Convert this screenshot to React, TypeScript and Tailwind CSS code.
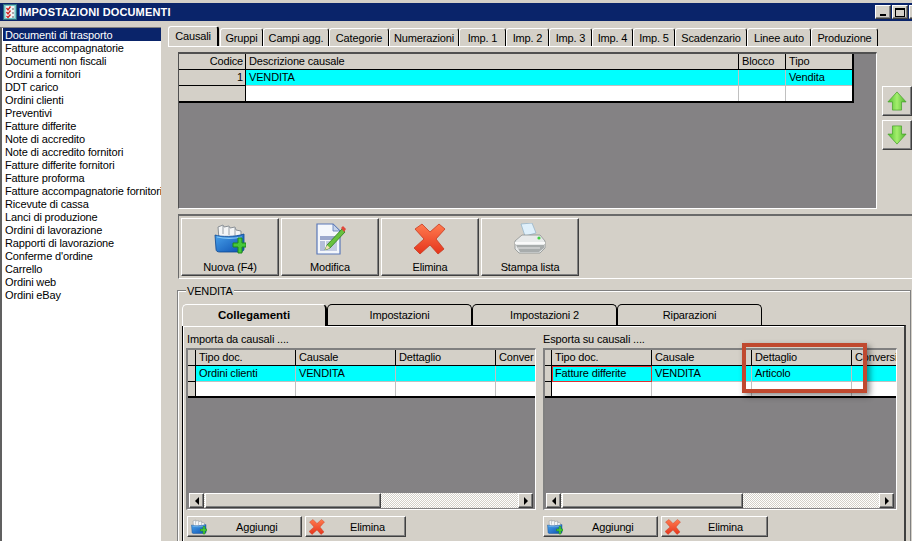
import React from "react";

const raised = "border border-t-white border-l-white border-r-[#404040] border-b-[#404040] shadow-[inset_-1px_-1px_0_#808080] bg-[#d4d0c8]";

const items = ["Documenti di trasporto","Fatture accompagnatorie","Documenti non fiscali","Ordini a fornitori","DDT carico","Ordini clienti","Preventivi","Fatture differite","Note di accredito","Note di accredito fornitori","Fatture differite fornitori","Fatture proforma","Fatture accompagnatorie fornitori","Ricevute di cassa","Lanci di produzione","Ordini di lavorazione","Rapporti di lavorazione","Conferme d'ordine","Carrello","Ordini web","Ordini eBay"];

const topTabs: [string, number][] = [["Gruppi",43],["Campi agg.",66],["Categorie",60],["Numerazioni",70],["Imp. 1",47],["Imp. 2",43],["Imp. 3",43],["Imp. 4",41],["Imp. 5",42],["Scadenzario",72],["Linee auto",64],["Produzione",67]];

function FolderIcon({ s = 32, id }: { s?: number; id: string }) {
  return (
    <svg width={s} height={s} viewBox="0 0 32 32">
      <defs>
        <linearGradient id={id} x1="0" y1="0" x2="1" y2="1">
          <stop offset="0" stopColor="#4aa3ec" />
          <stop offset="1" stopColor="#0b4fb0" />
        </linearGradient>
      </defs>
      <path d="M4 4l5-2 1 2 5-1 1 2 5-1 1 3 5 1v8H5z" fill="#f4f5f6" stroke="#8a9096" strokeWidth="1" />
      <path d="M9 3v8M15 4v8M21 5v7" stroke="#9aa0a6" strokeWidth="1" />
      <path d="M1 12c6 2 20 2 29-1v15c0 2-2 3-4 3H6c-3 0-4-1-4-3z" fill={`url(#${id})`} stroke="#0d468f" strokeWidth="0.8" />
      <path d="M3 14c8 2 16 2 25 0" stroke="#8cc8f4" strokeWidth="1.2" fill="none" />
      <path d="M19 20h5v-5h4v5h4v4h-4v6h-4v-6h-5z" fill="#46c83a" stroke="#1f8a18" strokeWidth="1" />
    </svg>
  );
}

function DocIcon() {
  return (
    <svg width="32" height="32" viewBox="0 0 32 32">
      <path d="M3 1h16l7 7v23H3z" fill="#f4f7fc" stroke="#5a78b8" strokeWidth="1.2" />
      <path d="M19 1v7h7z" fill="#c7d4ea" stroke="#5a78b8" strokeWidth="0.8" />
      <rect x="6" y="13" width="17" height="4" fill="#9ba8cc" />
      <rect x="6" y="18" width="5" height="10" fill="#b4bedb" />
      <rect x="12" y="18" width="11" height="10" fill="#c4cce2" />
      <path d="M28 6l3 3-15 16-5 2 2-5z" fill="#68c23e" stroke="#2e7a1e" strokeWidth="0.8" />
      <path d="M27 5l2-2 3 3-2 3z" fill="#e0483a" />
      <path d="M13 22l3 3-5 2z" fill="#f1dfb8" />
    </svg>
  );
}

function XIcon({ s = 32, id }: { s?: number; id: string }) {
  return (
    <svg width={s} height={s} viewBox="0 0 32 32">
      <defs>
        <linearGradient id={id} x1="0" y1="0" x2="0" y2="1">
          <stop offset="0" stopColor="#ff7b4f" />
          <stop offset="1" stopColor="#e5341c" />
        </linearGradient>
      </defs>
      <path d="M8 1l8 8 9-8 6 5-9 10 8 10-6 5-8-9-10 9-6-6 10-9-9-10z" fill={`url(#${id})`} stroke="#c73a20" strokeWidth="0.8" />
    </svg>
  );
}

function PrinterIcon() {
  return (
    <svg width="32" height="32" viewBox="0 0 32 32">
      <path d="M7 1l11-1 4 10-11 3z" fill="#dff0fb" stroke="#8fb0c6" strokeWidth="0.7" />
      <path d="M1 18l7-6h18l5 6v7l-5 5H5l-4-4z" fill="#e8eaea" stroke="#8c9090" strokeWidth="0.8" />
      <path d="M1 19h30v2H1z" fill="#fafafa" />
      <path d="M2 22h28v3l-5 4H6z" fill="#a8acac" />
      <path d="M4 25h22" stroke="#e8e8e8" strokeWidth="1" />
      <circle cx="25" cy="15" r="1.6" fill="#40d040" />
    </svg>
  );
}

function Arrow({ down, id }: { down?: boolean; id: string }) {
  return (
    <svg width="20" height="20" viewBox="0 0 22 22">
      <defs>
        <linearGradient id={id} x1="0" y1="0" x2="1" y2="0">
          <stop offset="0" stopColor="#4fbf30" />
          <stop offset="0.5" stopColor="#a4ee6c" />
          <stop offset="1" stopColor="#4cb42c" />
        </linearGradient>
      </defs>
      <path d={down ? "M6 1h10v9h5L11 21 1 10h5z" : "M11 1l10 11h-5v9H6v-9H1z"} fill={`url(#${id})`} stroke="#46a02a" strokeWidth="0.8" />
    </svg>
  );
}

function TitleIcon() {
  return (
    <svg width="14" height="16" viewBox="0 0 14 16">
      <rect x="0.5" y="0.5" width="13" height="15" fill="#6fc3c8" stroke="#2d6d7c" />
      <rect x="2.5" y="2" width="9" height="12" fill="#f2f2f2" />
      <path d="M3.5 4l1.5 2 2.5-3.5M3.5 8l1.5 2 2.5-3.5M3.5 12l1.5 1.5 2.5-3" fill="none" stroke="#d02020" strokeWidth="1.3" />
      <path d="M9 5h2M9 9h2M9 13h2" stroke="#606060" />
    </svg>
  );
}

function BigBtn({ label, icon }: { label: string; icon: React.ReactNode }) {
  return (
    <div className={`w-[98px] h-[58px] flex flex-col items-center pt-[4px] ${raised}`}>
      <div className="h-[32px]">{icon}</div>
      <span className="mt-[6px] leading-[13px]">{label}</span>
    </div>
  );
}

function SmallBtn({ w, label, icon, pl }: { w: string; label: string; icon: React.ReactNode; pl: string }) {
  return (
    <div className={`${w} h-[21px] flex items-center pl-[3px] ${raised}`}>
      <div className="w-[16px] h-[16px]">{icon}</div>
      <span className={`${pl} mt-[2px] leading-[13px]`}>{label}</span>
    </div>
  );
}

function ScrollBtn({ right }: { right?: boolean }) {
  return (
    <div className={`w-[15px] h-[15px] shrink-0 flex items-center justify-center ${raised}`}>
      <div className={right ? "w-0 h-0 border-y-[4px] border-y-transparent border-l-[4px] border-l-black" : "w-0 h-0 border-y-[4px] border-y-transparent border-r-[4px] border-r-black"} />
    </div>
  );
}

function Scrollbar({ thumb, ml }: { thumb: string; ml: string }) {
  return (
    <div className={`flex h-[15px] mb-px ${ml} mr-[2px] bg-[repeating-conic-gradient(#d4d0c8_0_25%,#ffffff_0_50%)] bg-[length:2px_2px]`}>
      <ScrollBtn />
      <div className={`${thumb} h-[15px] ml-px ${raised}`} />
      <div className="flex-1" />
      <ScrollBtn right />
    </div>
  );
}

type Cell = { t: string; focus?: boolean };

function LowerGrid({ ind, cols, row, thumb, last }: { ind: string; cols: string[]; row: Cell[]; thumb: string; last: string }) {
  const heads = ["Tipo doc.", "Causale", "Dettaglio", last];
  const widths = cols;
  return (
    <div className="flex flex-col h-[162px] w-full border-t-2 border-l-2 border-t-[#808080] border-l-[#808080] border-r border-b border-r-white border-b-white bg-[#848284] overflow-hidden">
      <div className="flex h-[16px]">
        <div className={`${ind} shrink-0 bg-[#d4d0c8] border-r border-b border-black`} />
        {heads.map((h, i) => (
          <div key={h} className={`${widths[i]} shrink-0 bg-[#d4d0c8] border-r border-b border-black pl-[3px] leading-[15px] overflow-hidden whitespace-nowrap`}>{h}</div>
        ))}
      </div>
      <div className="flex h-[16px]">
        <div className={`${ind} shrink-0 bg-[#d4d0c8] border-r border-b border-black`} />
        {row.map((c, i) => (
          <div key={i} className={`${widths[i]} shrink-0 bg-[#00ffff] whitespace-nowrap ${c.focus ? "pl-[2px] leading-[13px] border border-[#e03030]" : "pl-[3px] leading-[15px] border-r border-b border-[#c0c0c0]"}`}>{c.t}</div>
        ))}
      </div>
      <div className="flex h-[16px] border-b-2 border-black">
        <div className={`${ind} shrink-0 bg-[#d4d0c8] border-r border-black`} />
        {widths.map((w, i) => (
          <div key={i} className={`${w} shrink-0 bg-white border-r border-[#c0c0c0]`} />
        ))}
      </div>
      <div className="flex-1" />
      <Scrollbar thumb={thumb} ml="ml-px" />
    </div>
  );
}

export default function App() {
  return (
    <div className="relative w-[912px] h-[541px] overflow-hidden bg-[#d4d0c8] flex flex-col text-[11px] tracking-[-0.15px] text-black font-['Liberation_Sans',Arial,sans-serif]">
      {/* Title bar */}
      <div className="mt-[3px] h-[18px] shrink-0 bg-[#0a246a] flex items-center pl-[3px]">
        <TitleIcon />
        <span className="ml-[2px] font-bold text-white text-[11px] tracking-[0.15px]">IMPOSTAZIONI DOCUMENTI</span>
        <div className="ml-auto flex gap-px -mr-[13px]">
          <div className={`w-[16px] h-[14px] flex items-end justify-center pb-[2px] ${raised}`}><div className="w-[6px] h-[2px] bg-black" /></div>
          <div className={`w-[16px] h-[14px] flex items-center justify-center ${raised}`}><div className="w-[10px] h-[9px] border border-t-2 border-black" /></div>
          <div className={`w-[16px] h-[14px] ${raised}`} />
        </div>
      </div>

      <div className="flex flex-1 min-h-0">
        {/* Left list */}
        <div className="mt-[6px] w-[161px] shrink-0 bg-white border-l-2 border-t border-l-[#606060] border-t-[#808080] pl-px overflow-hidden">
          {items.map((it, i) => (
            <div key={it} className={`h-[13px] leading-[15px] pl-[2px] whitespace-nowrap ${i === 0 ? "bg-[#0a246a] text-white" : ""}`}>{it}</div>
          ))}
        </div>

        {/* Right area */}
        <div className="ml-[7px] flex-1 min-w-0 flex flex-col">
          {/* top tabs */}
          <div className="mt-[5px] h-[20px] flex items-end">
            <div className="w-[51px] h-[20px] border-t border-l border-white border-r-2 border-r-black rounded-t-[3px] flex items-center justify-center leading-[15px]">Causali</div>
            <div className="w-px" />
            {topTabs.map(([t, w]) => (
              <div key={t} style={{ width: w }} className="h-[18px] pt-[2px] border-t border-l border-white border-r border-r-black rounded-t-[3px] flex items-center justify-center leading-[13px] whitespace-nowrap">{t}</div>
            ))}
          </div>

          <div className="border-t border-white pl-[10px] h-[168px] flex">
            <div className="mt-[5px] w-[701px] h-[157px] border-t-2 border-l border-t-[#505050] border-l-[#505050] border-b border-r border-b-white border-r-white bg-[#848284]">
              <div className="w-[675px] border-r-2 border-b-2 border-black">
                <div className="flex h-[16px]">
                  <div className="w-[67px] bg-[#d4d0c8] border-r border-b border-black text-right pr-[2px] leading-[15px]">Codice</div>
                  <div className="w-[493px] bg-[#d4d0c8] border-r border-b border-black pl-[3px] leading-[15px]">Descrizione causale</div>
                  <div className="w-[47px] bg-[#d4d0c8] border-r border-b border-black pl-[3px] leading-[15px]">Blocco</div>
                  <div className="flex-1 bg-[#d4d0c8] border-b border-black pl-[3px] leading-[15px]">Tipo</div>
                </div>
                <div className="flex h-[16px]">
                  <div className="w-[67px] bg-[#d4d0c8] border-r border-b border-black text-right pr-[2px] leading-[15px]">1</div>
                  <div className="w-[493px] bg-[#00ffff] border-r border-b border-[#c0c0c0] pl-[3px] leading-[15px]">VENDITA</div>
                  <div className="w-[47px] bg-[#00ffff] border-r border-b border-[#c0c0c0]" />
                  <div className="flex-1 bg-[#00ffff] border-b border-[#c0c0c0] pl-[3px] leading-[15px]">Vendita</div>
                </div>
                <div className="flex h-[15px]">
                  <div className="w-[67px] bg-[#d4d0c8] border-r border-black" />
                  <div className="w-[493px] bg-white border-r border-[#c0c0c0]" />
                  <div className="w-[47px] bg-white border-r border-[#c0c0c0]" />
                  <div className="flex-1 bg-white" />
                </div>
              </div>
            </div>
            <div className="ml-[5px] mt-[39px] flex flex-col gap-[4px]">
              <div className={`w-[30px] h-[30px] flex items-center justify-center ${raised}`}><Arrow id="au" /></div>
              <div className={`w-[30px] h-[30px] flex items-center justify-center ${raised}`}><Arrow down id="ad" /></div>
            </div>
          </div>

          {/* Toolbar */}
          <div className="ml-[10px] h-[65px] border-t-2 border-l border-b border-t-[#6a6a6a] border-l-[#6a6a6a] border-b-white flex gap-[2px] pl-[2px] pt-[2px]">
            <BigBtn label="Nuova (F4)" icon={<FolderIcon id="f1" />} />
            <BigBtn label="Modifica" icon={<DocIcon />} />
            <BigBtn label="Elimina" icon={<XIcon id="x1" />} />
            <BigBtn label="Stampa lista" icon={<PrinterIcon />} />
          </div>

          {/* Group */}
          <div className="relative mt-[11px] ml-[9px] mr-px flex-1 min-h-0 border-t border-l border-r border-[#808080] shadow-[inset_1px_1px_0_#ffffff] pl-[4px] pt-[13px]">
            <div className="absolute left-[8px] -top-[6px] px-px bg-[#d4d0c8] leading-[13px]">VENDITA</div>
            <div className="flex h-[21px]">
              <div className="w-[145px] h-[22px] relative z-10 pt-px bg-[#d4d0c8] border-t border-l border-white border-r-2 border-r-black rounded-t-[5px] flex items-center justify-center font-bold text-[11.5px] tracking-normal">Collegamenti</div>
              {["Impostazioni", "Impostazioni 2", "Riparazioni"].map((t) => (
                <div key={t} className="w-[145px] h-[21px] pt-px border-t border-l border-r border-black rounded-t-[5px] flex items-center justify-center">{t}</div>
              ))}
            </div>
            <div className="w-[724px] h-[300px] border-t border-l border-black border-r-2 border-r-[#404040] shadow-[inset_1px_1px_0_#ffffff] flex pl-[3px] pt-[7px]">
              <div className="w-[350px] flex flex-col">
                <div className="pl-px h-[13px] leading-[13px] mb-[2px]">Importa da causali ....</div>
                <LowerGrid ind="w-[8px]" cols={["w-[100px]", "w-[100px]", "w-[100px]", "w-[100px]"]} thumb="w-[176px]" last="Conver" row={[{ t: "Ordini clienti" }, { t: "VENDITA" }, { t: "" }, { t: "" }]} />
                <div className="mt-[6px] pl-px flex gap-[3px]">
                  <SmallBtn w="w-[115px]" label="Aggiungi" pl="ml-[29px]" icon={<FolderIcon s={16} id="f2" />} />
                  <SmallBtn w="w-[101px]" label="Elimina" pl="ml-[25px]" icon={<XIcon s={16} id="x2" />} />
                </div>
              </div>
              <div className="ml-[7px] w-[354px] flex flex-col">
                <div className="h-[13px] leading-[13px] mb-[2px]">Esporta su causali ....</div>
                <LowerGrid ind="w-[7px]" cols={["w-[100px]", "w-[100px]", "w-[100px]", "w-[100px]"]} thumb="w-[181px]" last="Conversi" row={[{ t: "Fatture differite", focus: true }, { t: "VENDITA" }, { t: "Articolo" }, { t: "" }]} />
                <div className="mt-[6px] flex gap-[3px]">
                  <SmallBtn w="w-[115px]" label="Aggiungi" pl="ml-[29px]" icon={<FolderIcon s={16} id="f3" />} />
                  <SmallBtn w="w-[107px]" label="Elimina" pl="ml-[27px]" icon={<XIcon s={16} id="x3" />} />
                </div>
              </div>
            </div>
          </div>
        </div>
      </div>

      {/* Annotation */}
      <div className="absolute left-[742px] top-[343px] w-[125px] h-[50px] border-[4px] border-[#c0492f] shadow-[3px_3px_6px_rgba(0,0,0,0.45)]" />
    </div>
  );
}
